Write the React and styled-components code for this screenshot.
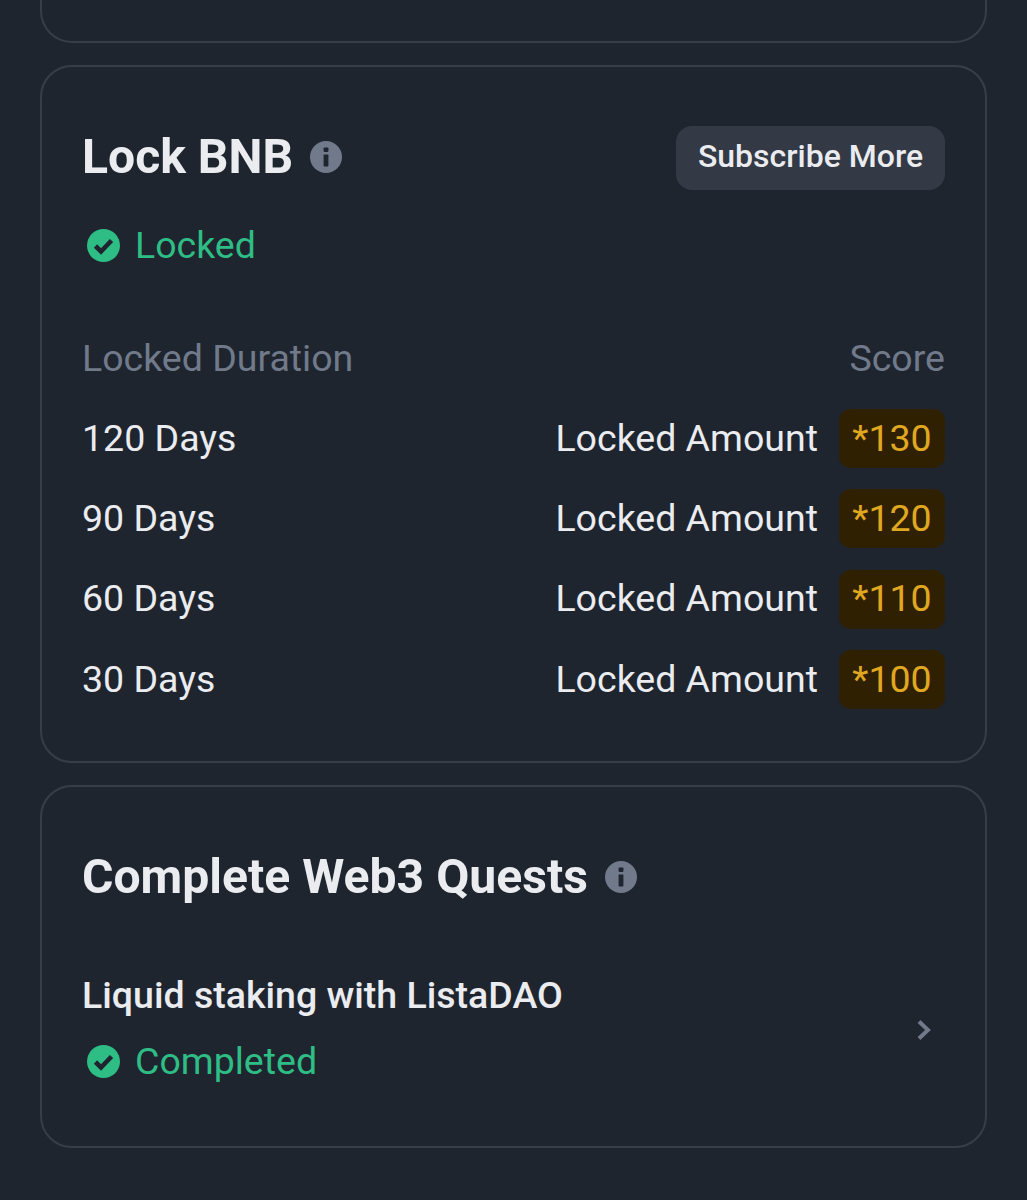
import React from 'react';
import styled, { createGlobalStyle } from 'styled-components';

const GlobalStyle = createGlobalStyle`
  html, body {
    margin: 0;
    padding: 0;
    background: #1f252f;
  }
  body {
    font-family: Roboto, "Liberation Sans", sans-serif;
  }
`;

const Page = styled.div`
  width: 1027px;
  height: 1200px;
  overflow: hidden;
  box-sizing: border-box;
  padding: 0 40px;
  display: flex;
  flex-direction: column;
  gap: 22px;
  background: #1f252f;
`;

const Stub = styled.div`
  height: 43px;
  flex: none;
  box-sizing: border-box;
  border: 2px solid #383e49;
  border-top: none;
  border-radius: 0 0 32px 32px;
`;

const Card = styled.section`
  flex: none;
  box-sizing: border-box;
  border: 2px solid #383e49;
  border-radius: 32px;
  padding: 0 40px;
  height: ${props => props.$height}px;
`;

const HeaderRow = styled.div`
  display: flex;
  align-items: center;
  justify-content: space-between;
  padding-top: ${props => props.$top}px;
`;

const TitleWrap = styled.div`
  display: flex;
  align-items: center;
  gap: 17px;
  margin-bottom: ${props => props.$lift || 0}px;
`;

const Title = styled.h2`
  margin: 0;
  font-size: 48.1px;
  line-height: 56px;
  font-weight: 700;
  color: #eaecef;
`;

const SubscribeButton = styled.button`
  width: 269px;
  height: 64px;
  border: none;
  border-radius: 16px;
  background: #333945;
  color: #eaecef;
  font-family: Roboto, sans-serif;
  font-size: 32px;
  font-weight: 500;
  padding: 0 0 4px;
`;

const Status = styled.div`
  display: flex;
  align-items: center;
  gap: 15px;
  padding-left: 5px;
  margin-top: ${props => props.$top}px;
  color: #2ebd85;
  font-size: 37.5px;
  line-height: 44px;
`;

const TableHead = styled.div`
  display: flex;
  justify-content: space-between;
  margin-top: 69px;
  color: #707a8a;
  font-size: 37.5px;
  line-height: 44px;
`;

const Rows = styled.div`
  display: flex;
  flex-direction: column;
  gap: 21px;
  margin-top: 28px;
`;

const Row = styled.div`
  display: flex;
  align-items: center;
  justify-content: space-between;
  height: 59.3px;
  color: #eaecef;
  font-size: 37.5px;
`;

const RowRight = styled.div`
  display: flex;
  align-items: center;
  gap: 21px;
`;

const ScoreBadge = styled.span`
  width: 106px;
  height: 59px;
  margin-top: 2px;
  box-sizing: border-box;
  padding-bottom: 2px;
  border-radius: 12px;
  background: #302002;
  color: #e0a820;
  display: flex;
  align-items: center;
  justify-content: center;
`;

const QuestRow = styled.div`
  display: flex;
  align-items: center;
  justify-content: space-between;
  padding-right: 13px;
  margin-top: 68px;
`;

const QuestName = styled.div`
  font-size: 37.5px;
  line-height: 44px;
  font-weight: 500;
  color: #eaecef;
`;

const ChevronSlot = styled.span`
  display: flex;
  margin-top: 4px;
`;

const InfoIcon = () => (
  <svg width="32" height="32" viewBox="0 0 32 32" aria-hidden="true">
    <circle cx="16" cy="16" r="16" fill="#707a8a" />
    <rect x="13.6" y="6.5" width="4.8" height="4.4" rx="0.8" fill="#1f252f" />
    <rect x="13.6" y="13.5" width="4.8" height="12" rx="0.8" fill="#1f252f" />
  </svg>
);

const CheckIcon = () => (
  <svg width="33" height="33" viewBox="0 0 33 33" aria-hidden="true">
    <circle cx="16.5" cy="16.5" r="16.5" fill="#2ebd85" />
    <path d="M8.5 17l5.5 5.5L24.5 11.5" fill="none" stroke="#1f252f" strokeWidth="4.6" />
  </svg>
);

const Chevron = () => (
  <svg width="16" height="22" viewBox="0 0 16 22" aria-hidden="true">
    <path d="M3 2.5l9 8.5-9 8.5" fill="none" stroke="#707a8a" strokeWidth="4" />
  </svg>
);

const lockRows = [
  { days: '120 Days', score: '*130' },
  { days: '90 Days', score: '*120' },
  { days: '60 Days', score: '*110' },
  { days: '30 Days', score: '*100' },
];

export default function App() {
  return (
    <Page>
      <GlobalStyle />
      <Stub />
      <Card $height={698}>
        <HeaderRow $top={59}>
          <TitleWrap $lift={2}>
            <Title>Lock BNB</Title>
            <InfoIcon />
          </TitleWrap>
          <SubscribeButton>Subscribe More</SubscribeButton>
        </HeaderRow>
        <Status $top={33}>
          <CheckIcon />
          Locked
        </Status>
        <TableHead>
          <span>Locked Duration</span>
          <span>Score</span>
        </TableHead>
        <Rows>
          {lockRows.map(row => (
            <Row key={row.days}>
              <span>{row.days}</span>
              <RowRight>
                <span>Locked Amount</span>
                <ScoreBadge>{row.score}</ScoreBadge>
              </RowRight>
            </Row>
          ))}
        </Rows>
      </Card>
      <Card $height={363}>
        <HeaderRow $top={62}>
          <TitleWrap>
            <Title>Complete Web3 Quests</Title>
            <InfoIcon />
          </TitleWrap>
        </HeaderRow>
        <QuestRow>
          <div>
            <QuestName>Liquid staking with ListaDAO</QuestName>
            <Status $top={22}>
              <CheckIcon />
              Completed
            </Status>
          </div>
          <ChevronSlot>
            <Chevron />
          </ChevronSlot>
        </QuestRow>
      </Card>
    </Page>
  );
}
